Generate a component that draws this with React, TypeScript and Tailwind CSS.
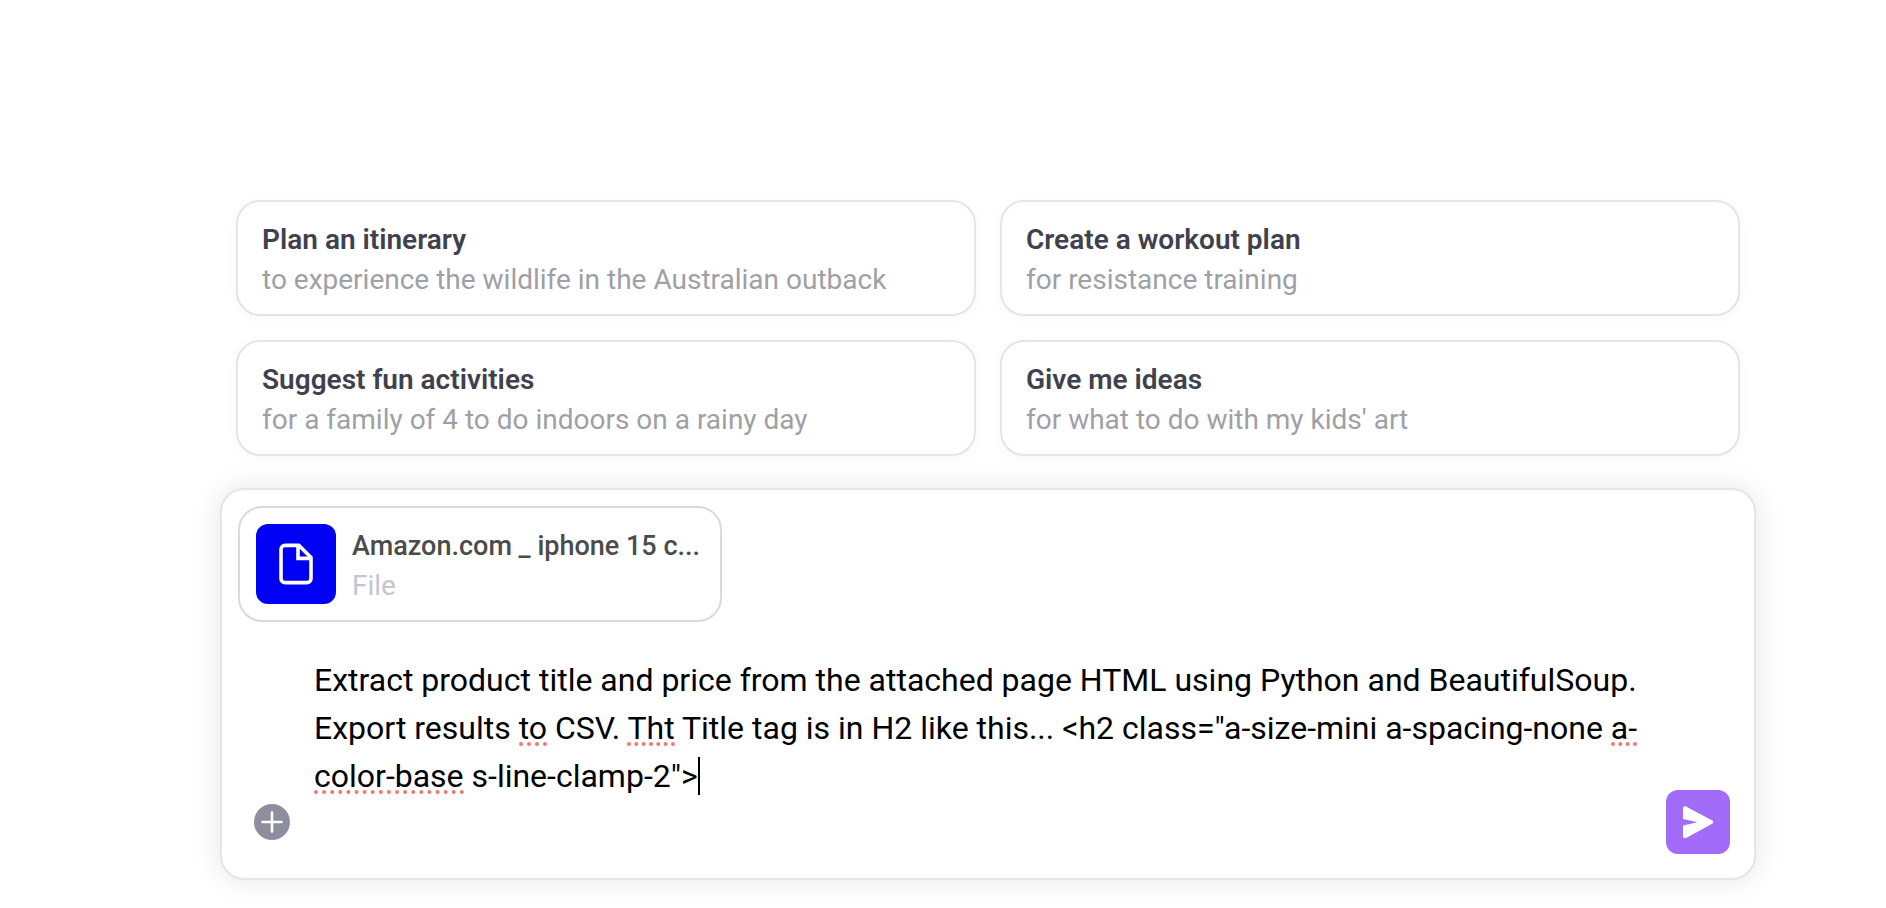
import { useLayoutEffect, useRef, useState } from "react";

const suggestions = [
  { title: "Plan an itinerary", detail: "to experience the wildlife in the Australian outback" },
  { title: "Create a workout plan", detail: "for resistance training" },
  { title: "Suggest fun activities", detail: "for a family of 4 to do indoors on a rainy day" },
  { title: "Give me ideas", detail: "for what to do with my kids' art" },
];

const initialPrompt =
  'Extract product title and price from the attached page HTML using Python and BeautifulSoup. Export results to CSV. Tht Title tag is in H2 like this... <h2 class="a-size-mini a-spacing-none a-color-base s-line-clamp-2">';

// Words that the spell checker underlines.
const flagged = /(\bto\b|\bTht\b|\ba-color-base\b)/;

const promptText = "text-[32px] leading-[48px] whitespace-pre-wrap break-words";

type Box = { left: number; top: number; width: number; height: number };

// Lays the text out in a temporary block and reads where flagged words and the end of the text fall.
function measure(host: HTMLElement, text: string): { marks: Box[]; caret: Box } {
  const block = document.createElement("div");
  block.className = `invisible absolute inset-x-0 top-0 ${promptText}`;
  const end = document.createElement("span");
  end.textContent = "\u200b";
  const words: HTMLElement[] = [];
  text.split(flagged).forEach((part, i) => {
    const span = document.createElement("span");
    span.textContent = part;
    if (i % 2) words.push(span);
    block.append(span);
  });
  block.append(end);
  host.append(block);
  const origin = host.getBoundingClientRect();
  const toBox = (r: DOMRect): Box => ({
    left: r.left - origin.left,
    top: r.top - origin.top,
    width: r.width,
    height: r.height,
  });
  const marks = words.flatMap((w) => Array.from(w.getClientRects()).map(toBox));
  const caret = toBox(end.getBoundingClientRect());
  block.remove();
  return { marks, caret };
}

function SuggestionCard({ title, detail }: { title: string; detail: string }) {
  return (
    <button
      type="button"
      className="rounded-3xl border-2 border-[#e5e5e5] bg-white px-6 pt-[18px] pb-[14px] text-left text-[28px] leading-10 shadow-[0_2px_14px_rgba(0,0,0,0.03)]"
    >
      <span className="block truncate font-semibold text-[#40414f]">{title}</span>
      <span className="block truncate text-[#9f9fa7]">{detail}</span>
    </button>
  );
}

function FileChip() {
  return (
    <div className="flex w-[484px] gap-4 rounded-3xl border-2 border-[#d9d9e3] px-4 pt-4 pb-[14px]">
      <div className="size-20 shrink-0 rounded-xl bg-[#0000f5]">
        <svg viewBox="0 0 80 80" fill="none" stroke="white" strokeWidth="3.6" strokeLinejoin="round" aria-hidden="true">
          <path d="M43 21.4H29a4 4 0 0 0-4 4V54.6a4 4 0 0 0 4 4H51a4 4 0 0 0 4-4V33.4z" />
          <path d="M42 21.4V34.4H55" strokeLinejoin="miter" />
        </svg>
      </div>
      <div className="min-w-0 pt-[2px] leading-10">
        <div className="truncate text-[27px] font-medium text-[#4b4b4b]">Amazon.com _ iphone 15 c...</div>
        <div className="text-[28px] text-[#c5c5d2]">File</div>
      </div>
    </div>
  );
}

function PromptBox() {
  const [text, setText] = useState(initialPrompt);
  const [layout, setLayout] = useState<{ marks: Box[]; caret: Box } | null>(null);
  const host = useRef<HTMLDivElement>(null);

  useLayoutEffect(() => {
    const el = host.current;
    if (!el) return;
    const update = () => setLayout(measure(el, text));
    update();
    const observer = new ResizeObserver(update);
    observer.observe(el);
    document.fonts.ready.then(update);
    return () => observer.disconnect();
  }, [text]);

  return (
    <div ref={host} className="relative">
      <textarea
        aria-label="Message"
        rows={3}
        spellCheck={false}
        value={text}
        onChange={(e) => setText(e.target.value)}
        className={`block w-full resize-none overflow-hidden bg-transparent p-0 text-black caret-transparent outline-none ${promptText}`}
      />
      {layout?.marks.map((m, i) => (
        <span
          key={i}
          className="pointer-events-none absolute border-b-4 border-dotted border-[#f4786f]"
          style={{ left: m.left, top: m.top, width: m.width, height: m.height - 1 }}
        />
      ))}
      {layout && (
        <span
          className="pointer-events-none absolute w-[2px] bg-black"
          style={{ left: layout.caret.left, top: layout.caret.top, height: layout.caret.height }}
        />
      )}
    </div>
  );
}

export default function App() {
  return (
    <main className="min-h-screen bg-white pt-[200px] pr-[130px] pb-7 pl-[220px] font-['Roboto',sans-serif]">
      <section aria-label="Suggestions" className="mx-4 grid grid-cols-2 gap-6">
        {suggestions.map((s) => (
          <SuggestionCard key={s.title} title={s.title} detail={s.detail} />
        ))}
      </section>

      <form
        onSubmit={(e) => e.preventDefault()}
        className="mt-8 rounded-3xl border-2 border-[#e5e5e5] bg-white p-4 pb-6 shadow-[0_0_30px_rgba(0,0,0,0.1)]"
      >
        <FileChip />
        <div className="flex items-end pr-2 pl-4">
          <div className="flex h-16 items-center">
            <button type="button" aria-label="Attach file" className="size-9 rounded-full bg-[#8e8ea0]">
              <svg viewBox="0 0 36 36" fill="none" stroke="white" strokeWidth="2.6" strokeLinecap="round" aria-hidden="true">
                <path d="M18 8.5V27.5M8.5 18H27.5" />
              </svg>
            </button>
          </div>
          <div className="mr-2 mb-[54px] ml-6 min-w-0 flex-1 pt-[34px]">
            <PromptBox />
          </div>
          <button
            type="submit"
            aria-label="Send message"
            className="size-16 shrink-0 rounded-xl bg-[#a26bfa]"
          >
            <svg viewBox="0 0 64 64" fill="white" aria-hidden="true">
              <path d="M17 18.2C17 16.5 18.600 15.6 20.1 16.5L46.2 30.6C47.6 31.4 47.6 33 46.2 33.8L20.1 47.9C18.6 48.7 17 47.8 17 46.2V35.6L31.5 32.2L17 28.9Z" />
            </svg>
          </button>
        </div>
      </form>
    </main>
  );
}
